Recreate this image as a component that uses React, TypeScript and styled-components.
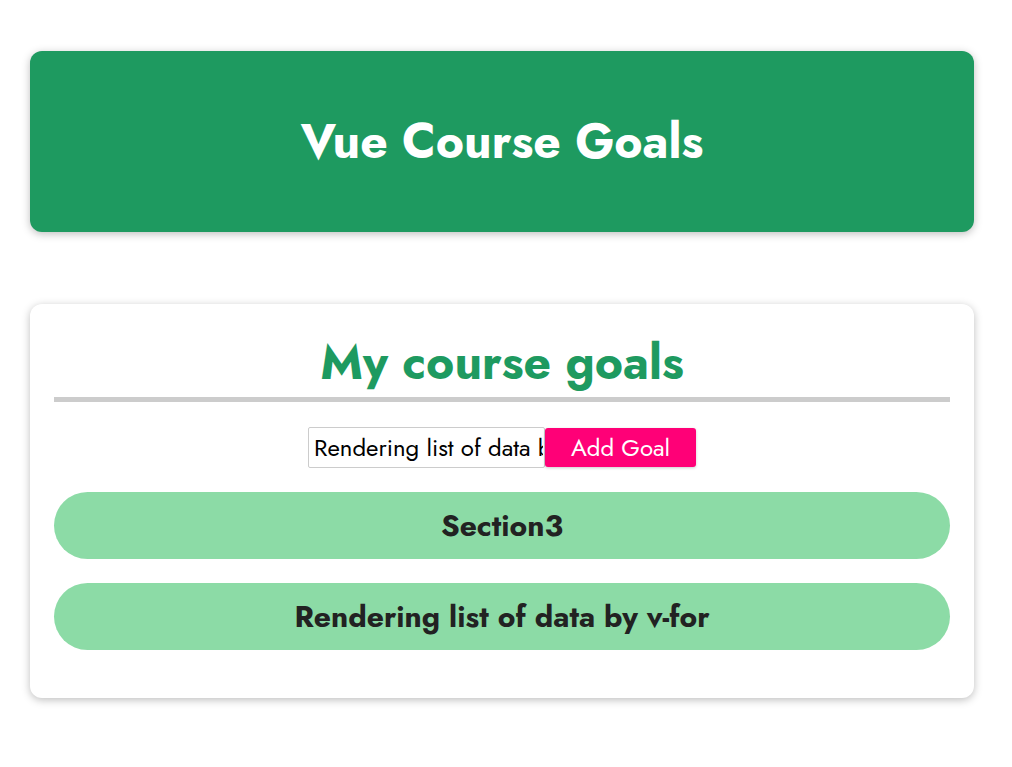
import React from "react";
import styled, { createGlobalStyle } from "styled-components";

const GlobalStyle = createGlobalStyle`
  html, body { margin: 0; padding: 0; background: #ffffff; }
  body { font-family: Jost, Lato, "Open Sans", sans-serif; }
  * { box-sizing: border-box; }
`;

const Page = styled.div`
  padding: 51px 38px 40px 30px;
  display: flex;
  flex-direction: column;
  gap: 72px;
`;

const Header = styled.header`
  height: 181px;
  border-radius: 12px;
  background: #1e9a60;
  box-shadow: 0 2px 8px rgba(0, 0, 0, 0.26);
  display: flex;
  align-items: center;
  justify-content: center;
`;

const HeaderTitle = styled.h1`
  margin: 0;
  color: #ffffff;
  font-size: 48px;
  font-weight: 700;
  letter-spacing: 0;
`;

const Card = styled.section`
  border-radius: 12px;
  background: #ffffff;
  box-shadow: 0 2px 8px rgba(0, 0, 0, 0.26);
  padding: 27px 24px 48px;
  display: flex;
  flex-direction: column;
`;

const CardTitle = styled.h2`
  margin: 0;
  padding-bottom: 3px;
  color: #1e9a60;
  font-size: 48px;
  font-weight: 700;
  line-height: 63px;
  text-align: center;
  border-bottom: 5px solid #cccccc;
`;

const Form = styled.div`
  margin-top: 25px;
  display: flex;
  justify-content: center;
  align-items: center;
`;

const Input = styled.input`
  width: 237px;
  height: 41px;
  border: 1px solid #cccccc;
  border-radius: 2px;
  padding: 0 1px 0 5px;
  font-family: inherit;
  font-size: 24px;
  color: #000;
  outline: none;
`;

const Button = styled.button`
  width: 151px;
  height: 39px;
  border: none;
  border-radius: 3px;
  background: #ff0077;
  color: #ffffff;
  font-family: inherit;
  font-size: 24px;
  box-shadow: 0 1px 3px rgba(0, 0, 0, 0.2);
  cursor: pointer;
`;

const GoalList = styled.ul`
  list-style: none;
  margin: 24px 0 0;
  padding: 0;
  display: flex;
  flex-direction: column;
  gap: 24px;
`;

const Goal = styled.li`
  height: 67px;
  border-radius: 34px;
  background: #8cdba6;
  color: #222222;
  font-size: 30px;
  font-weight: 700;
  display: flex;
  align-items: center;
  justify-content: center;
`;

const goals = ["Section3", "Rendering list of data by v-for"];

export default function App() {
  return (
    <>
      <GlobalStyle />
      <Page>
        <Header>
          <HeaderTitle>Vue Course Goals</HeaderTitle>
        </Header>
        <Card>
          <CardTitle>My course goals</CardTitle>
          <Form>
            <Input type="text" defaultValue="Rendering list of data by v-for" />
            <Button>Add Goal</Button>
          </Form>
          <GoalList>
            {goals.map((g) => (
              <Goal key={g}>{g}</Goal>
            ))}
          </GoalList>
        </Card>
      </Page>
    </>
  );
}
